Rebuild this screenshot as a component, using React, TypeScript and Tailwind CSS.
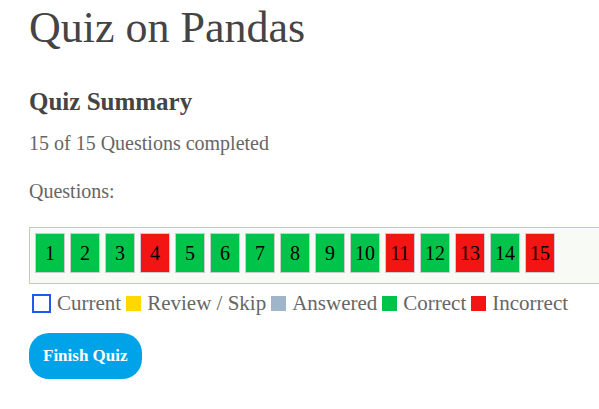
import clsx from "clsx";

const incorrect = new Set([4, 11, 13, 15]);
const questions = Array.from({ length: 15 }, (_, i) => i + 1);

const legend = [
  { label: "Current", swatch: "size-[19px] border-2 border-[#1f5af0] bg-white" },
  { label: "Review / Skip", swatch: "size-[15px] bg-[#ffd800]" },
  { label: "Answered", swatch: "size-[15px] bg-[#a0b4ca]" },
  { label: "Correct", swatch: "size-[15px] bg-[#00c449]" },
  { label: "Incorrect", swatch: "size-[15px] bg-[#f31414]" },
];

export default function App() {
  return (
    <main className="overflow-x-hidden bg-white pl-[29px] font-[Georgia,'Liberation_Serif',serif] text-[20px] leading-7 text-[#666]">
      <h1 className="pt-1 text-[44px] leading-[48px] text-[#444]">Quiz on Pandas</h1>
      <section>
        <h2 className="pt-9 text-[25px] font-bold leading-7 text-[#444]">Quiz Summary</h2>
        <p className="pt-[13px]">15 of 15 Questions completed</p>
        <p className="pt-5">Questions:</p>
        <ol className="-mr-1 mt-[22px] flex gap-[5px] border border-[#c3d1a3] bg-[#f8faf5] px-[5px] pt-[5px] pb-[10px] text-black">
          {questions.map((n) => (
            <li key={n}>
              <button
                type="button"
                className={clsx(
                  "block h-10 w-[30px] border border-[#ccc] text-center",
                  incorrect.has(n) ? "bg-[#f31414]" : "bg-[#00c449]",
                )}
              >
                {n}
              </button>
            </li>
          ))}
        </ol>
        <ul className="mt-[5px] flex gap-[5px] whitespace-nowrap pl-[3px] text-[21px]">
          {legend.map(({ label, swatch }) => (
            <li key={label} className="flex items-center gap-[6px]">
              <span className={swatch} />
              {label}
            </li>
          ))}
        </ul>
        <button
          type="button"
          className="mt-4 h-[46px] rounded-[20px] bg-[#00a2e8] px-[14px] text-[17px] font-bold text-white"
        >
          Finish Quiz
        </button>
      </section>
    </main>
  );
}
